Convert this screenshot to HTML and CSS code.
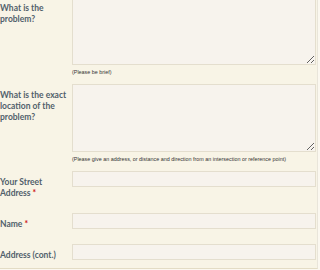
FILE: index.html
```html
<!DOCTYPE html>
<html lang="en">
<head>
    <meta charset="UTF-8">
    <title>Report a Problem</title>
    <link rel="stylesheet" href="styles.css">
</head>
<body>

<div class="form">
    <div class="row">
        <label class="label" for="problem">What is the<br>problem?</label>
        <div class="field">
            <textarea id="problem" class="area"></textarea>
            <div class="note">(Please be brief)</div>
        </div>
    </div>

    <div class="row">
        <label class="label" for="location">What is the exact<br>location of the<br>problem?</label>
        <div class="field">
            <textarea id="location" class="area"></textarea>
            <div class="note">(Please give an address, or distance and direction from an intersection or reference point)</div>
        </div>
    </div>

    <div class="row">
        <label class="label" for="street">Your Street<br>Address <span class="req">*</span></label>
        <div class="field">
            <input type="text" id="street" class="text">
        </div>
    </div>

    <div class="row">
        <label class="label" for="name">Name <span class="req">*</span></label>
        <div class="field">
            <input type="text" id="name" class="text">
        </div>
    </div>

    <div class="row last">
        <label class="label" for="address2">Address (cont.)</label>
        <div class="field">
            <input type="text" id="address2" class="text">
        </div>
    </div>
</div>

</body>
</html>
```

FILE: styles.css
```css
body {
    margin: 0;
    background-color: #fbf8f0;
    font-family: Lato, Arial, sans-serif;
}
.form {
    width: 317px;
    margin-top: -3px;
    background-color: #f8f4e6;
    border-right: 1px solid #e9e5da;
    border-bottom: 1px solid #e3dcc5;
}
.row {
    display: grid;
    grid-template-columns: 72px 244px;
    align-items: start;
}
.label {
    padding: 6px 0 14px 0;
    font-size: 8.5px;
    line-height: 11px;
    font-weight: 700;
    white-space: nowrap;
    color: #51606b;
}
.last .label {
    padding-bottom: 7px;
}
.req {
    color: #cc1111;
}
.field {
    padding-bottom: 8px;
}
.area, .text {
    display: block;
    box-sizing: border-box;
    width: 244px;
    margin: 0;
    border: 1px solid #e4dece;
    background-color: #f7f3ed;
    font-family: inherit;
}
.area {
    height: 68px;
}
.text {
    height: 16px;
    padding: 0 3px;
}
.note {
    margin-top: 4px;
    font-family: "Liberation Sans", Arial, sans-serif;
    font-size: 5.4px;
    line-height: 7px;
    color: #333333;
    white-space: nowrap;
}
```
